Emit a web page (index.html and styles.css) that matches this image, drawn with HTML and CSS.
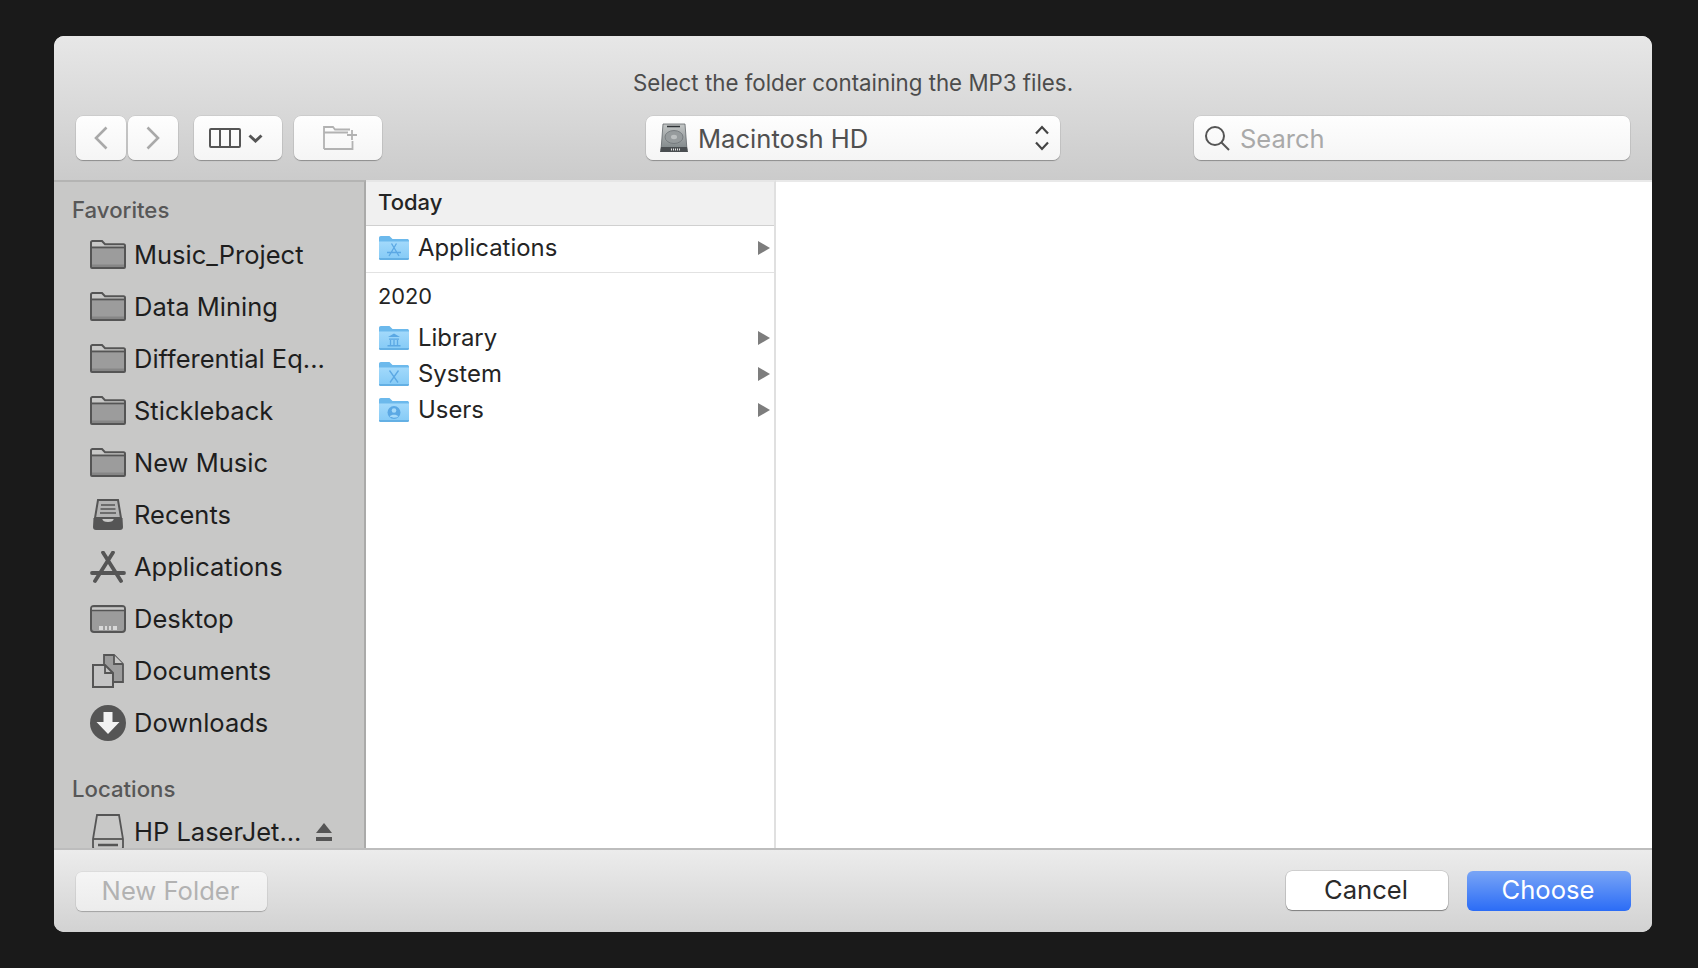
FILE: index.html
```html
<!DOCTYPE html>
<html lang="en">
<head>
    <meta charset="UTF-8">
    <meta name="viewport" content="width=device-width, initial-scale=1.0">
    <title>Select folder</title>
    <link rel="stylesheet" href="styles.css">
</head>
<body>
    <svg class="sprite" aria-hidden="true">
        <defs>
            <linearGradient id="blue-fill" x1="0" y1="0" x2="0" y2="1">
                <stop offset="0" stop-color="#a2d9fb"/>
                <stop offset="1" stop-color="#84caf6"/>
            </linearGradient>
            <linearGradient id="disk-fill" x1="0" y1="0" x2="0" y2="1">
                <stop offset="0" stop-color="#c4c7c7"/>
                <stop offset="1" stop-color="#7c8386"/>
            </linearGradient>
        </defs>
        <symbol id="side-folder" viewBox="0 0 36 29">
            <path d="M1 27V2.500C1 1.600 1.600 1 2.500 1h9.500l3 3.200h18.500c.9 0 1.500.6 1.500 1.500V27c0 .6-.4 1-1 1H2c-.6 0-1-.4-1-1z" fill="#c8c8c7" stroke="#555" stroke-width="2"/>
            <path d="M2 8.500h32V27H2z" fill="#9c9c9c"/>
            <path d="M2 24.500h32V27H2z" fill="#868686"/>
            <path d="M1 7.500h34" stroke="#555" stroke-width="1.800"/>
        </symbol>
        <symbol id="blue-folder" viewBox="0 0 30 24">
            <path d="M0 22V2C0 .9.700 0 1.800 0h8.700l3 3h14.700c1 0 1.800.7 1.800 1.700V22c0 1-.7 1.800-1.800 1.800H1.800C.7 23.800 0 23 0 22z" fill="#6cb9ec"/>
            <path d="M0 5.500h30V22c0 1-.7 1.800-1.800 1.800H1.800C.7 23.800 0 23 0 22z" fill="url(#blue-fill)"/>
            <path d="M0 22.300h30v.2c0 .8-.7 1.300-1.800 1.300H1.800C.7 23.800 0 23.300 0 22.500z" fill="#5aa8de"/>
        </symbol>
    </svg>

    <div class="dialog">
        <header class="head">
            <div class="head-title">Select the folder containing the MP3 files.</div>
            <div class="toolbar">
                <div class="tool-left">
                    <div class="nav-pair">
                        <button class="tool-btn nav-btn">
                            <svg width="14" height="24" viewBox="0 0 14 24"><path d="M12.500 1.500 2 12l10.500 10.500" class="line-grey"/></svg>
                        </button>
                        <button class="tool-btn nav-btn">
                            <svg width="14" height="24" viewBox="0 0 14 24"><path d="M1.500 1.500 12 12 1.500 22.500" class="line-grey"/></svg>
                        </button>
                    </div>
                    <button class="tool-btn wide-btn view-btn">
                        <svg width="32" height="20" viewBox="0 0 32 20"><rect x="1" y="1" width="30" height="18" rx="1" class="line-dark"/><path d="M11 1v18M21 1v18" class="line-dark"/></svg>
                        <svg width="15" height="9" viewBox="0 0 15 9"><path d="M1.500 1.500 7.500 7l6-5.500" class="line-chev"/></svg>
                    </button>
                    <button class="tool-btn wide-btn folder-btn">
                        <svg width="34" height="24" viewBox="0 0 34 24"><path d="M1 23V1h9l2 2.500h15M1 6.500h24M29.500 15v8H1" class="line-faint"/><path d="M29 4v10M24 9h10" class="line-faint"/></svg>
                    </button>
                </div>
                <div class="disk-select">
                    <svg class="disk-icon" width="28" height="30" viewBox="0 0 28 30">
                        <path d="M3 1h22l2 26H1z" fill="url(#disk-fill)" stroke="#5f6468" stroke-width=".8"/>
                        <path d="M7 3.500h13" stroke="#2f3336" stroke-width="1.500"/>
                        <ellipse cx="14" cy="14" rx="9" ry="6.500" fill="#969b9d" stroke="#6f7477" stroke-width=".8"/>
                        <ellipse cx="14" cy="14" rx="3" ry="2.200" fill="#bcc0c1"/>
                        <path d="M1 24h26l1 5H0z" fill="#4a4e51"/>
                        <path d="M11 26.500h9" stroke="#e3e3e3" stroke-width="2" stroke-dasharray="1 1"/>
                    </svg>
                    <span class="disk-name">Macintosh HD</span>
                    <svg class="updown" width="16" height="26" viewBox="0 0 16 26"><path d="M2 8.500 8 2l6 6.500M2 17.500 8 24l6-6.500" class="line-updown"/></svg>
                </div>
                <div class="search-box">
                    <svg width="26" height="26" viewBox="0 0 26 26"><circle cx="11" cy="11" r="9" class="line-search"/><path d="M17.500 17.500 25 25" class="line-search"/></svg>
                    <span class="search-text">Search</span>
                </div>
            </div>
        </header>

        <main class="browser">
            <nav class="sidebar">
                <div class="side-label">Favorites</div>
                <div class="side-row"><span class="side-icon"><svg width="36" height="29"><use href="#side-folder"/></svg></span>Music_Project</div>
                <div class="side-row"><span class="side-icon"><svg width="36" height="29"><use href="#side-folder"/></svg></span>Data Mining</div>
                <div class="side-row"><span class="side-icon"><svg width="36" height="29"><use href="#side-folder"/></svg></span>Differential Eq...</div>
                <div class="side-row"><span class="side-icon"><svg width="36" height="29"><use href="#side-folder"/></svg></span>Stickleback</div>
                <div class="side-row"><span class="side-icon"><svg width="36" height="29"><use href="#side-folder"/></svg></span>New Music</div>
                <div class="side-row"><span class="side-icon">
                    <svg width="32" height="32" viewBox="0 0 32 32">
                        <path d="M6 1h20l3 18H3z" fill="#b4b4b4" stroke="#555" stroke-width="2"/>
                        <path d="M9 6h14M8.500 10h15M8 14h16" stroke="#555" stroke-width="1.500"/>
                        <path d="M1.500 19H10c.5 3 2.500 4 6 4s5.500-1 6-4h8.500l.5 9c0 2-1 3-3 3H4c-2 0-3-1-3-3z" fill="#555"/>
                    </svg>
                </span>Recents</div>
                <div class="side-row"><span class="side-icon">
                    <svg width="36" height="32" viewBox="0 0 36 32">
                        <path d="M13 1.500 31 30M23 1.500 5 30" stroke="#555" stroke-width="3.800" stroke-linecap="round"/>
                        <path d="M2 22h32" stroke="#555" stroke-width="3.800" stroke-linecap="round"/>
                    </svg>
                </span>Applications</div>
                <div class="side-row"><span class="side-icon">
                    <svg width="36" height="28" viewBox="0 0 36 28">
                        <rect x="1" y="1" width="34" height="26" rx="3" fill="#9c9c9c" stroke="#555" stroke-width="2"/>
                        <path d="M2 2.500h32v3H2z" fill="#c8c8c7"/>
                        <path d="M2 5.500h32" stroke="#555" stroke-width="1.500"/>
                        <path d="M9 21h18v4H9z" fill="#d8d8d8"/>
                        <path d="M14 21v4M18 21v4M22 21v4" stroke="#777" stroke-width="1.200"/>
                    </svg>
                </span>Desktop</div>
                <div class="side-row"><span class="side-icon">
                    <svg width="32" height="34" viewBox="0 0 32 34">
                        <path d="M12 1h10l9 9v18H12z" fill="#9c9c9c" stroke="#555" stroke-width="1.800"/>
                        <path d="M22 1v9h9" fill="#c8c8c7" stroke="#555" stroke-width="1.800"/>
                        <path d="M1 11h12l8 8v14H1z" fill="#c4c4c4" stroke="#555" stroke-width="2"/>
                        <path d="M13 11v8h8" fill="none" stroke="#555" stroke-width="1.800"/>
                    </svg>
                </span>Documents</div>
                <div class="side-row"><span class="side-icon">
                    <svg width="36" height="36" viewBox="0 0 36 36">
                        <circle cx="18" cy="18" r="18" fill="#555"/>
                        <path d="M13.500 7h9v10h7L18 29 6.500 17h7z" fill="#f2f2f2"/>
                    </svg>
                </span>Downloads</div>
                <div class="side-label side-label-next">Locations</div>
                <div class="side-row"><span class="side-icon">
                    <svg width="32" height="36" viewBox="0 0 32 36">
                        <path d="M5 1h22l4 24v8c0 1.500-1 2-2 2H3c-1 0-2-.5-2-2v-8z" fill="none" stroke="#555" stroke-width="1.800"/>
                        <path d="M1 25h30" stroke="#555" stroke-width="1.800"/>
                        <path d="M6 31h20" stroke="#555" stroke-width="2.500"/>
                    </svg>
                </span>HP LaserJet...
                    <svg class="eject" width="16" height="18" viewBox="0 0 16 18"><path d="M8 0l8 10H0z" fill="#555"/><path d="M0 14h16v4H0z" fill="#555"/></svg>
                </div>
            </nav>

            <section class="column">
                <div class="col-head">Today</div>
                <div class="col-row col-row-first">
                    <svg class="col-icon" width="30" height="24" viewBox="0 0 30 24">
                        <use href="#blue-folder"/>
                        <path d="M12.500 7.500 20 20M17.500 7.500 10 20M8 16.500h14" class="glyph-blue"/>
                    </svg>
                    <span>Applications</span>
                    <span class="col-arrow"></span>
                </div>
                <div class="col-year">2020</div>
                <div class="col-row">
                    <svg class="col-icon" width="30" height="24" viewBox="0 0 30 24">
                        <use href="#blue-folder"/>
                        <path d="M15 7.500 9 11h12zM10 12.500h10v1.200H10zM8.500 19h13v1.500h-13z" fill="#5ba8e4"/>
                        <path d="M11.500 14v5M15 14v5M18.500 14v5" class="glyph-blue"/>
                    </svg>
                    <span>Library</span>
                    <span class="col-arrow"></span>
                </div>
                <div class="col-row">
                    <svg class="col-icon" width="30" height="24" viewBox="0 0 30 24">
                        <use href="#blue-folder"/>
                        <path d="M10.500 8.500 19 20.500M19.500 8.500 11 20.500" class="glyph-blue"/>
                    </svg>
                    <span>System</span>
                    <span class="col-arrow"></span>
                </div>
                <div class="col-row">
                    <svg class="col-icon" width="30" height="24" viewBox="0 0 30 24">
                        <use href="#blue-folder"/>
                        <circle cx="15" cy="14.500" r="6.500" fill="#5ba8e4"/>
                        <circle cx="15" cy="12.500" r="2.300" fill="#a5d9f9"/>
                        <path d="M10.800 18.500c1-2.500 7.400-2.500 8.400 0-2 1.600-6.400 1.600-8.400 0z" fill="#a5d9f9"/>
                    </svg>
                    <span>Users</span>
                    <span class="col-arrow"></span>
                </div>
            </section>

            <section class="preview"></section>
        </main>

        <footer class="foot">
            <button class="foot-btn foot-new">New Folder</button>
            <div class="foot-actions">
                <button class="foot-btn foot-cancel">Cancel</button>
                <button class="foot-btn foot-choose">Choose</button>
            </div>
        </footer>
    </div>
</body>
</html>
```

FILE: styles.css
```css
html, body {
    height: 100%;
}
body {
    margin: 0;
    padding: 36px 46px 36px 54px;
    box-sizing: border-box;
    background-color: #1a1a1a;
    font-family: Inter, "Liberation Sans", sans-serif;
    overflow: hidden;
}
.sprite {
    position: absolute;
    width: 0;
    height: 0;
}
button {
    font-family: inherit;
    padding: 0;
    border: none;
}
.dialog {
    height: 896px;
    display: flex;
    flex-direction: column;
    border-radius: 10px;
    overflow: hidden;
    background-color: #fff;
}

/* title bar + toolbar */
.head {
    height: 144px;
    background: linear-gradient(to bottom, #e7e7e7, #cbcbcb);
}
.head-title {
    height: 30px;
    padding-top: 32px;
    line-height: 30px;
    text-align: center;
    font-size: 22.3px;
    color: #4c4c4c;
}
.toolbar {
    display: grid;
    grid-template-columns: 1fr 414px 1fr;
    align-items: center;
    margin-top: 18px;
    padding: 0 22px;
}
.tool-left {
    display: flex;
    gap: 12px;
}
.nav-pair {
    display: flex;
    gap: 2px;
    margin-right: 4px;
}
.tool-btn,
.disk-select,
.search-box {
    height: 44px;
    box-sizing: border-box;
    border-radius: 7px;
    background: linear-gradient(to bottom, #fefefe, #f5f5f5);
    box-shadow: 0 1px 1px rgba(0, 0, 0, 0.28), 0 0 0 0.5px rgba(0, 0, 0, 0.1);
}
.tool-btn {
    display: flex;
    align-items: center;
    justify-content: center;
}
.nav-btn {
    width: 50px;
}
.wide-btn {
    width: 88px;
}
.view-btn {
    gap: 7px;
    padding-right: 4px;
}
.folder-btn {
    padding-left: 4px;
}
.line-grey, .line-dark, .line-chev, .line-faint, .line-updown, .line-search {
    fill: none;
}
.line-grey {
    stroke: #a9a9a9;
    stroke-width: 2.6;
}
.line-dark {
    stroke: #555;
    stroke-width: 2;
}
.line-chev {
    stroke: #555;
    stroke-width: 3;
}
.line-faint {
    stroke: #b2b2b2;
    stroke-width: 1.8;
}
.line-updown {
    stroke: #444;
    stroke-width: 2.2;
}
.line-search {
    stroke: #555;
    stroke-width: 2;
}
.disk-select {
    display: flex;
    align-items: center;
    padding: 0 10px 0 14px;
    color: #505050;
    font-size: 25.6px;
}
.disk-name {
    margin-left: 10px;
}
.updown {
    margin-left: auto;
}
.search-box {
    width: 436px;
    justify-self: end;
    display: flex;
    align-items: center;
    gap: 10px;
    padding-left: 10px;
}
.search-text {
    color: #a9a9a9;
    font-size: 25.5px;
}

/* browser area */
.browser {
    flex: 1;
    min-height: 0;
    display: flex;
}
.sidebar {
    width: 260px;
    border-top: 2px solid #b4b4b3;
    border-right: 2px solid #aaaaa9;
    background-color: #c8c8c7;
    padding: 14px 32px 0 18px;
    overflow: hidden;
}
.side-label {
    height: 28px;
    line-height: 28px;
    margin-bottom: 5px;
    font-size: 22.2px;
    font-weight: 500;
    color: #575757;
}
.side-label-next {
    margin-top: 26px;
    margin-bottom: 3px;
}
.side-row {
    height: 52px;
    display: flex;
    align-items: center;
    margin-left: 18px;
    padding-bottom: 1px;
    box-sizing: border-box;
    font-size: 25.5px;
    color: #1e1e1e;
    white-space: nowrap;
}
.side-icon {
    flex: 0 0 36px;
    display: flex;
    justify-content: center;
    margin-right: 8px;
}
.eject {
    margin-left: auto;
}
.column {
    width: 408px;
    border-top: 2px solid #e6e6e6;
    border-right: 2px solid #e0e0e0;
    background-color: #fff;
    color: #242424;
    font-size: 23.9px;
}
.col-head {
    height: 43px;
    line-height: 41px;
    padding-left: 12px;
    border-bottom: 1px solid #d0d0d0;
    background-color: #f0f0f0;
    font-size: 22px;
    font-weight: 500;
}
.col-row {
    height: 36px;
    display: flex;
    align-items: center;
    padding: 0 4px 0 13px;
}
.col-row span:first-of-type {
    margin-top: -2px;
}
.col-row-first {
    height: 44px;
    padding-bottom: 2px;
    border-bottom: 1px solid #e2e2e2;
}
.col-icon {
    margin-right: 9px;
}
.col-arrow {
    margin-left: auto;
    width: 0;
    height: 0;
    border-left: 12px solid #7d7d7d;
    border-top: 7px solid transparent;
    border-bottom: 7px solid transparent;
}
.col-year {
    height: 47px;
    line-height: 46px;
    padding-left: 12px;
    font-size: 21.8px;
}
.glyph-blue {
    fill: none;
    stroke: #5ba8e4;
    stroke-width: 1.3;
}
.preview {
    flex: 1;
    border-top: 2px solid #e9e9e9;
    background-color: #fff;
}

/* bottom bar */
.foot {
    height: 82px;
    border-top: 2px solid #bdbdbd;
    display: flex;
    align-items: center;
    justify-content: space-between;
    padding: 0 21px 0 22px;
    background: linear-gradient(to bottom, #ececec, #d2d2d2);
}
.foot-actions {
    display: flex;
    align-items: flex-start;
    gap: 19px;
    margin-top: -1px;
}
.foot-btn {
    height: 39px;
    padding: 0 2px 2px 0;
    border-radius: 6px;
    font-size: 25.6px;
    text-align: center;
}
.foot-new {
    width: 191px;
    color: #b2b2b2;
    background: linear-gradient(to bottom, #f5f5f5, #ececec);
    box-shadow: 0 1px 1px rgba(0, 0, 0, 0.22), 0 0 0 0.5px rgba(0, 0, 0, 0.08);
}
.foot-cancel {
    width: 162px;
    color: #2a2a2a;
    background-color: #fff;
    box-shadow: 0 1px 1px rgba(0, 0, 0, 0.35), 0 0 0 0.5px rgba(0, 0, 0, 0.2);
}
.foot-choose {
    width: 164px;
    height: 40px;
    color: #fff;
    background: linear-gradient(to bottom, #79a5f6, #2b6cf6);
}
```
